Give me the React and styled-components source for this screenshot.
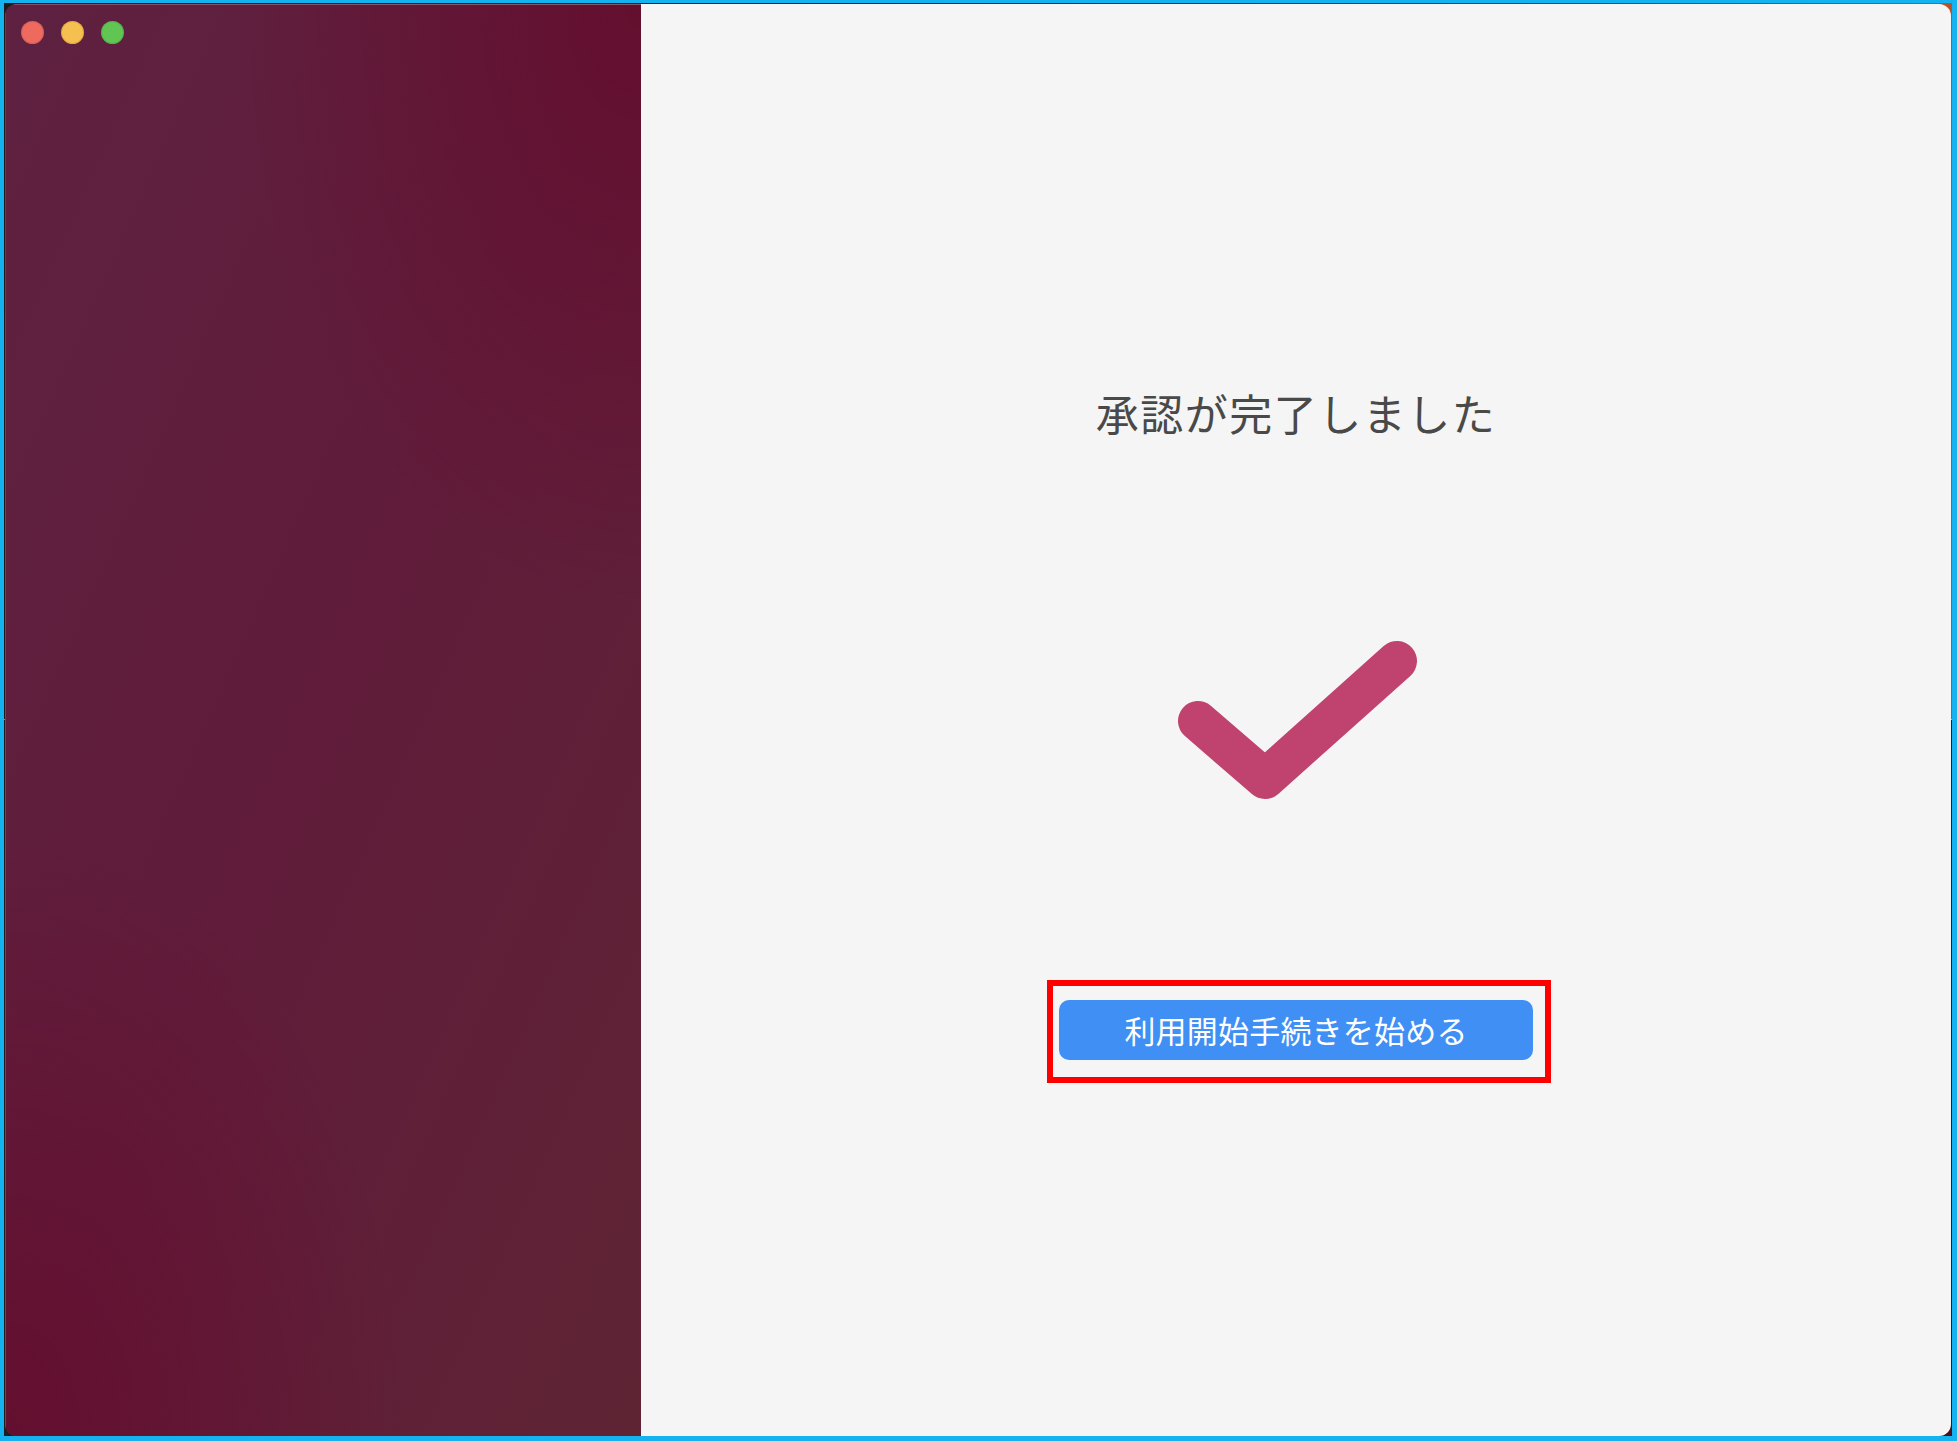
import React from "react";
import styled, { createGlobalStyle } from "styled-components";

const Global = createGlobalStyle`
  html, body { margin: 0; padding: 0; }
  body { width: 1957px; height: 1441px; overflow: hidden; }
  * { box-sizing: border-box; }
`;

const Frame = styled.div`
  width: 1957px;
  height: 1441px;
  border-style: solid;
  border-color: #14b2ee;
  border-width: 3px 5px 5px 4px;
  padding: 1px 1px 0 1px;
  background:
    linear-gradient(to right, #1d1a18 0%, #2a1a1a 40%, #7a2a22 80%, #b8522a 100%) top / 100% 50% no-repeat,
    linear-gradient(to right, #1e1e1e 0%, #2a1520 40%, #4a1020 100%) bottom / 100% 50% no-repeat;
  display: flex;
`;

const Window = styled.div`
  flex: 1;
  display: flex;
  border-radius: 12px;
  overflow: hidden;
  box-shadow: inset 0 0 0 1px rgba(255, 255, 255, 0.12);
`;

const Sidebar = styled.aside`
  position: relative;
  width: 636px;
  flex: none;
  background:
    radial-gradient(ellipse 90% 60% at 100% 0%, rgba(100, 14, 46, 0.95), rgba(100, 14, 46, 0) 70%),
    radial-gradient(ellipse 90% 60% at 0% 100%, rgba(100, 14, 46, 0.95), rgba(100, 14, 46, 0) 70%),
    linear-gradient(to bottom right, #5f2141 0%, #601c3a 50%, #5e2434 100%);
  border-top: 1px solid rgba(255, 255, 255, 0.25);
  border-left: 1px solid rgba(255, 255, 255, 0.15);
`;

const Lights = styled.div`
  display: flex;
  gap: 17px;
  padding: 16px 0 0 15px;
`;

const Light = styled.span`
  width: 23px;
  height: 23px;
  border-radius: 50%;
  background: ${(p) => p.$c};
  box-shadow: inset 0 0 0 1px rgba(0, 0, 0, 0.1);
`;

const Main = styled.main`
  flex: 1;
  background: #f4f5f4;
  display: flex;
  flex-direction: column;
  align-items: center;
  padding-top: 382px;
`;

const Title = styled.h1`
  margin: 0;
  font-family: "Noto Sans CJK JP", "Noto Sans", sans-serif;
  font-weight: 400;
  font-size: 43px;
  line-height: 52px;
  letter-spacing: 1.5px;
  color: #494949;
`;

const Check = styled.svg`
  display: block;
  margin-top: 193px;
  width: 260px;
  height: 180px;
`;

const ButtonWrap = styled.div`
  position: relative;
  margin-top: 189px;
`;

const StartButton = styled.button`
  width: 474px;
  height: 60px;
  border: none;
  border-radius: 10px;
  background: #3f8ff5;
  color: #ffffff;
  font-family: "Noto Sans CJK JP", "Noto Sans", sans-serif;
  font-size: 31px;
  letter-spacing: 0.2px;
  padding: 0 0 2px 0;
  cursor: pointer;
`;

const Highlight = styled.div`
  position: absolute;
  left: -12px;
  top: -20px;
  width: 504px;
  height: 103px;
  border: 6px solid #ff0000;
  pointer-events: none;
`;

export default function App() {
  return (
    <>
      <Global />
      <Frame>
        <Window>
          <Sidebar>
            <Lights>
              <Light $c="#ee6a5e" />
              <Light $c="#f5c04f" />
              <Light $c="#61c554" />
            </Lights>
          </Sidebar>
          <Main>
            <Title>承認が完了しました</Title>
            <Check viewBox="0 0 260 180" aria-hidden="true">
              <path
                d="M32 90 L99 148 L231 30"
                fill="none"
                stroke="#c0426e"
                strokeWidth="40"
                strokeLinecap="round"
                strokeLinejoin="round"
              />
            </Check>
            <ButtonWrap>
              <StartButton>利用開始手続きを始める</StartButton>
              <Highlight />
            </ButtonWrap>
          </Main>
        </Window>
      </Frame>
    </>
  );
}
